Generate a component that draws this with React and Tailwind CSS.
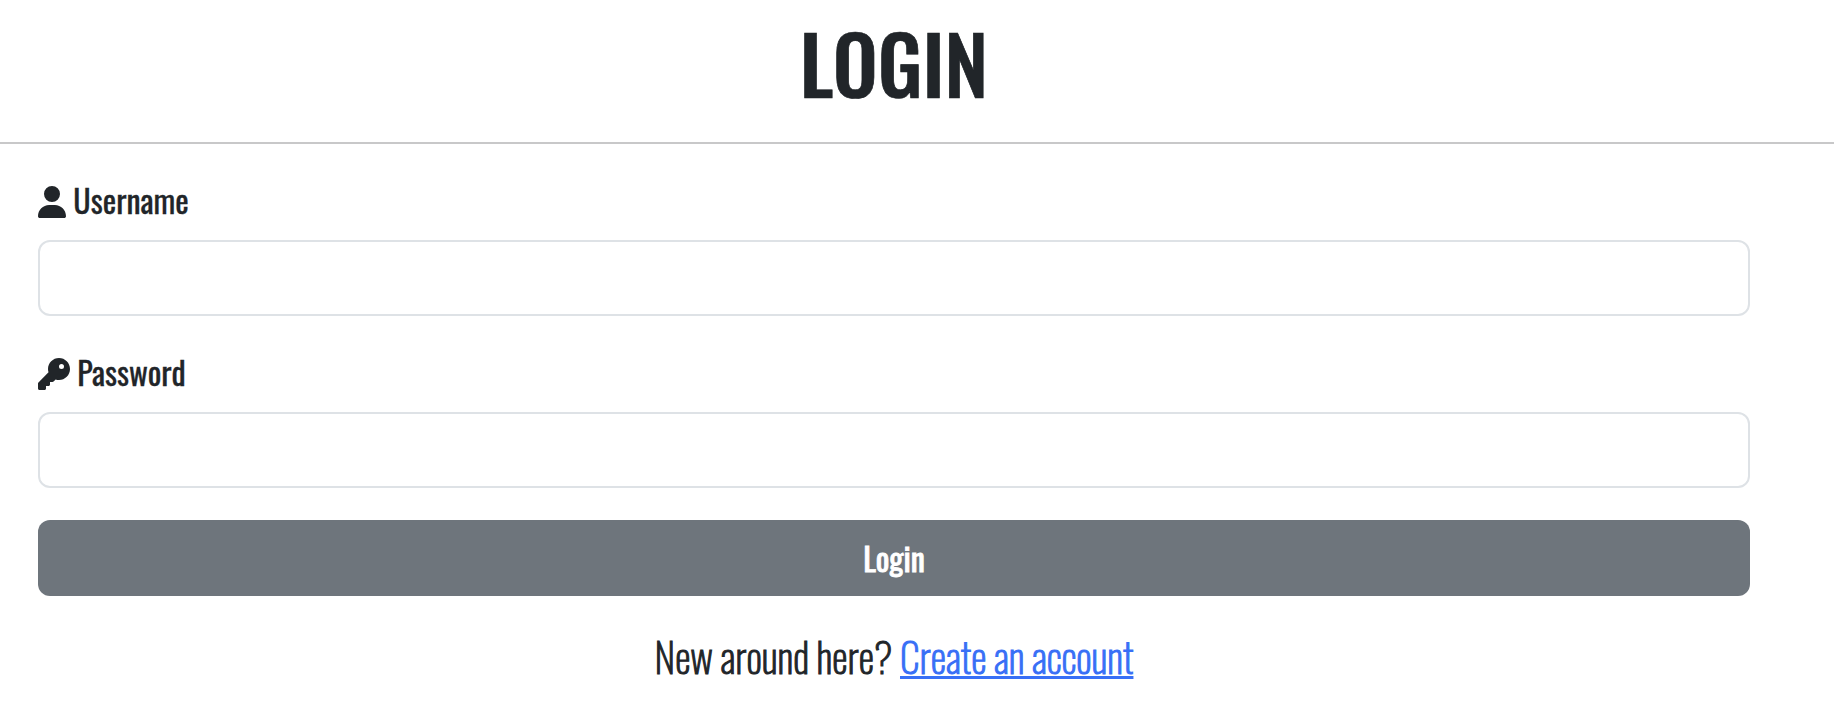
import { FaKey, FaUser } from "react-icons/fa6";

function Field({ id, label, type, icon }) {
  return (
    <div className="mb-8">
      <label
        htmlFor={id}
        className="mb-4 block h-12 text-[32px] leading-[48px] [-webkit-text-stroke:0.3px_#212529]"
      >
        {icon} {label}
      </label>
      <input
        id={id}
        type={type}
        className="block h-[76px] w-full rounded-xl border-2 border-[#dee2e6] bg-white px-6 text-[32px] outline-none"
      />
    </div>
  );
}

export default function App() {
  return (
    <main className="h-[712px] overflow-hidden bg-white font-['Oswald',sans-serif] text-[#212529]">
      <header className="h-36 border-b-2 border-[#c8c8c9] pt-3.5 pl-[38px] pr-[84px]">
        <h1 className="text-center text-[80px] leading-[96px] font-medium [-webkit-text-stroke:0.7px_#212529]">LOGIN</h1>
      </header>
      <form className="pt-8 pr-[84px] pl-[38px]" onSubmit={(e) => e.preventDefault()}>
        <Field
          id="username"
          label="Username"
          type="text"
          icon={<FaUser className="inline-block h-8 w-7 align-[-4px]" />}
        />
        <Field
          id="password"
          label="Password"
          type="password"
          icon={<FaKey className="inline-block h-8 w-8 align-[-4px]" />}
        />
        <button
          type="submit"
          className="block h-[76px] w-full rounded-xl bg-[#6e757c] text-center text-[32px] leading-[48px] font-normal text-white [-webkit-text-stroke:0.8px_#ffffff]"
        >
          Login
        </button>
        <p className="mt-[30px] text-center text-[40px] leading-[60px] font-extralight [-webkit-text-stroke:1px_#212529]">
          New around here?{" "}
          <a href="#" className="text-[#386ff6] underline decoration-[3px] underline-offset-[2px] [-webkit-text-stroke:1px_#386ff6]">
            Create an account
          </a>
        </p>
      </form>
    </main>
  );
}
